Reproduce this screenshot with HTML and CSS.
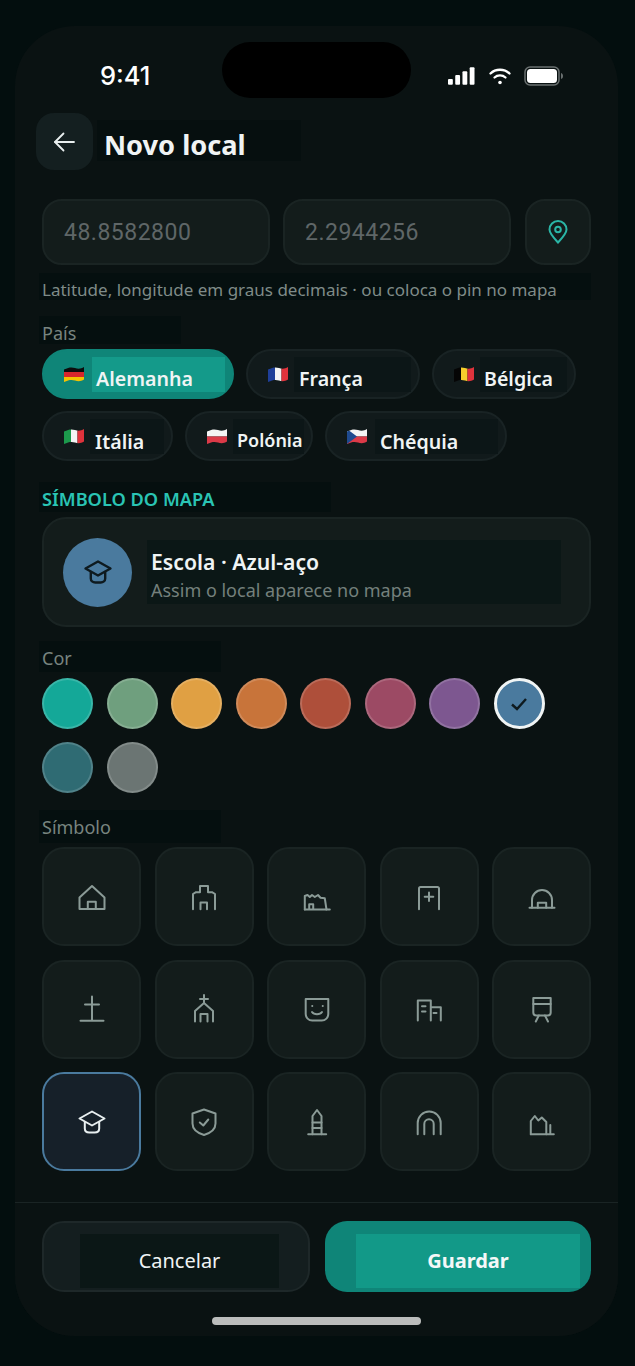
FILE: index.html
```
<!DOCTYPE html>
<html lang="pt">
<head>
<meta charset="utf-8">
<title>Novo local</title>
<meta name="viewport" content="width=device-width, initial-scale=1.0">
<link rel="stylesheet" href="styles.css">
</head>
<body>

<svg class="defs" width="0" height="0" aria-hidden="true">
	<defs>
		<clipPath id="wave"><path d="M0 2.500C5 0 8 0 11 1s6 1 9-1v12.500c-3 2-6 2-9 1s-6-1-11 1.500z"/></clipPath>
		<g id="cap">
			<path d="M15 4.500 27.500 11.500 15 18.500 2.500 11.500z"/>
			<path d="M7.800 15v6.500c0 2.500 2 4 4.500 4h5.400c2.500 0 4.500-1.500 4.500-4V15"/>
		</g>
	</defs>
</svg>

<div class="device">
	<div class="notch"></div>

	<div class="status">
		<span class="time">9:41</span>
		<div class="status-icons">
			<svg width="27" height="18" viewBox="0 0 28 18"><rect x="0" y="12" width="5" height="6" rx="1"/><rect x="7.500" y="8" width="5" height="10" rx="1"/><rect x="15" y="4" width="5" height="14" rx="1"/><rect x="22.500" y="0" width="5" height="18" rx="1"/></svg>
			<svg width="22" height="18" viewBox="0 0 22 18" fill="none" stroke="#fff" stroke-width="2.300" stroke-linecap="round"><path d="M1.500 6.500C6.500 1.500 15.500 1.500 20.500 6.500"/><path d="M5.500 10.500c3-2.800 8-2.800 11 0"/><circle cx="11" cy="15.500" r="1.800" fill="#fff" stroke="none"/></svg>
			<svg width="40" height="20" viewBox="0 0 40 20"><rect x="1" y="1" width="34" height="18" rx="5" fill="none" stroke="#6a7070" stroke-width="1.500"/><rect x="3" y="3" width="30" height="14" rx="3.500" fill="#fff"/><path d="M37 7c1.500.5 2 1.500 2 3s-.5 2.500-2 3z" fill="#6a7070"/></svg>
		</div>
	</div>

	<div class="header">
		<button class="back">
			<svg width="24" height="24" viewBox="0 0 24 24" fill="none" stroke="#e8eeee" stroke-width="1.800" stroke-linecap="round" stroke-linejoin="round"><path d="M21 12H2"/><path d="M10.500 3.500 2 12l8.500 8.500"/></svg>
		</button>
		<h1>Novo local</h1>
	</div>

	<div class="content">
		<div class="coords">
			<div class="input">48.8582800</div>
			<div class="input">2.2944256</div>
			<button class="pin-btn">
				<svg width="20" height="24" viewBox="0 0 20 24" fill="none" stroke="#2ab5a6" stroke-width="2"><path d="M10 22.500C5 17 1.500 13.500 1.500 9.500a8.500 8.500 0 0 1 17 0c0 4-3.500 7.500-8.500 13z"/><circle cx="10" cy="9.500" r="2.800"/></svg>
			</button>
		</div>
		<p class="hint">Latitude, longitude em graus decimais · ou coloca o pin no mapa</p>

		<div class="label label-pais">País</div>
		<div class="chips">
			<div class="chip chip-on chip-de">
				<svg class="flag" viewBox="0 0 20 15"><g clip-path="url(#wave)"><rect width="20" height="5.500" fill="#0c0c0c"/><rect y="5" width="20" height="5" fill="#d8262c"/><rect y="10" width="20" height="5" fill="#f4c400"/></g></svg>
				<span class="chip-name">Alemanha</span>
			</div>
			<div class="chip chip-fr">
				<svg class="flag" viewBox="0 0 20 15"><g clip-path="url(#wave)"><rect width="7" height="15" fill="#1f3f99"/><rect x="7" width="6.500" height="15" fill="#f4f4f4"/><rect x="13.500" width="6.500" height="15" fill="#e0333c"/></g></svg>
				<span class="chip-name">França</span>
			</div>
			<div class="chip chip-be">
				<svg class="flag" viewBox="0 0 20 15"><g clip-path="url(#wave)"><rect width="7" height="15" fill="#050505"/><rect x="7" width="6.500" height="15" fill="#f6cf2c"/><rect x="13.500" width="6.500" height="15" fill="#e0333c"/></g></svg>
				<span class="chip-name">Bélgica</span>
			</div>
			<div class="chip chip-it">
				<svg class="flag" viewBox="0 0 20 15"><g clip-path="url(#wave)"><rect width="7" height="15" fill="#1c9a4c"/><rect x="7" width="6.500" height="15" fill="#f4f4f4"/><rect x="13.500" width="6.500" height="15" fill="#e0333c"/></g></svg>
				<span class="chip-name">Itália</span>
			</div>
			<div class="chip chip-pl">
				<svg class="flag" viewBox="0 0 20 15"><g clip-path="url(#wave)"><rect width="20" height="7.500" fill="#f4f4f4"/><rect y="7.500" width="20" height="7.500" fill="#dc3a48"/></g></svg>
				<span class="chip-name">Polónia</span>
			</div>
			<div class="chip chip-cz">
				<svg class="flag" viewBox="0 0 20 15"><g clip-path="url(#wave)"><rect width="20" height="7.500" fill="#f4f4f4"/><rect y="7.500" width="20" height="7.500" fill="#dc3a48"/><path d="M0 0 10 7.500 0 15z" fill="#1f4a8f"/></g></svg>
				<span class="chip-name">Chéquia</span>
			</div>
		</div>

		<div class="section-title">SÍMBOLO DO MAPA</div>
		<div class="preview">
			<div class="avatar">
				<svg class="icon" viewBox="0 0 30 30"><use href="#cap"/></svg>
			</div>
			<div class="preview-text">
				<div class="preview-title">Escola · Azul-aço</div>
				<div class="preview-sub">Assim o local aparece no mapa</div>
			</div>
		</div>

		<div class="label label-cor">Cor</div>
		<div class="swatches">
			<div class="swatch c-teal"></div>
			<div class="swatch c-sage"></div>
			<div class="swatch c-amber"></div>
			<div class="swatch c-orange"></div>
			<div class="swatch c-rust"></div>
			<div class="swatch c-rose"></div>
			<div class="swatch c-purple"></div>
			<div class="swatch c-steel swatch-on">
				<svg width="18" height="16" viewBox="0 0 18 16" fill="none" stroke="#0e1a1f" stroke-width="2.400"><path d="M2 8.500 7 13 16 3"/></svg>
			</div>
			<div class="swatch c-petrol"></div>
			<div class="swatch c-grey"></div>
		</div>

		<div class="label label-simbolo">Símbolo</div>
		<div class="symbols">
			<div class="symbol"><svg class="icon" viewBox="0 0 30 30"><path d="M2.500 27V15.500L15 4l12.500 11.500V27z"/><path d="M10.800 27v-7.300h8V27"/></svg></div>
			<div class="symbol"><svg class="icon" viewBox="0 0 30 30"><path d="M4 27.300V12l3-1.800h4V4h8v6.200h4l3 1.800v15.300"/><path d="M11.500 27.300v-6.800h6.500v6.800"/></svg></div>
			<div class="symbol"><svg class="icon" viewBox="0 0 30 30"><path d="M2.800 27.500V14l2.700-1 2.300 2 2.200-2 2.800 2 3.200-2 2.500 2.700 4.300.6 1.700 11.200"/><path d="M2.800 27.500h25"/><path d="M7.200 27v-4.700h4V27"/></svg></div>
			<div class="symbol"><svg class="icon" viewBox="0 0 30 30"><path d="M5 27.300V6.500A1.500 1.500 0 0 1 6.500 5h17A1.500 1.500 0 0 1 25 6.500v20.800"/><path d="M15 10.500v8.500M10.700 14.700h8.600"/></svg></div>
			<div class="symbol"><svg class="icon" viewBox="0 0 30 30"><path d="M2.500 25.700h25"/><path d="M5 25.700V18a10 10 0 0 1 20 0v7.700"/><path d="M10.800 25.700v-5h8.400v5"/></svg></div>

			<div class="symbol"><svg class="icon" viewBox="0 0 30 30"><path d="M15 2.500v24.300M8 10.500h14M3.500 26.800h23"/></svg></div>
			<div class="symbol"><svg class="icon" viewBox="0 0 30 30"><path d="M15 1v8M11 5h8"/><path d="M6 27.500V17l9-8 9 8v10.500"/><path d="M11.500 27.500V20h7v7.500"/></svg></div>
			<div class="symbol"><svg class="icon" viewBox="0 0 30 30"><path d="M3.700 5h22.600v15a6.500 6.500 0 0 1-6.500 6.500h-9.600A6.500 6.500 0 0 1 3.700 20z"/><path d="M10 18c2 3 8 3 10 0"/><path d="M10.200 12h.1M20.700 12h.1"/></svg></div>
			<div class="symbol"><svg class="icon" viewBox="0 0 30 30"><path d="M3.800 26.500v-20h13v20"/><path d="M17 13.200h9.800v13.300"/><path d="M8 12.200h3.500M8 17.500h3.500M19.500 19h3"/></svg></div>
			<div class="symbol"><svg class="icon" viewBox="0 0 30 30"><path d="M6.300 4h17.400v14.500a3 3 0 0 1-3 3H9.300a3 3 0 0 1-3-3z"/><path d="M6.300 10h17.400"/><path d="M11.800 21.500l-3 6M18 21.500l3 6"/></svg></div>

			<div class="symbol symbol-on"><svg class="icon" viewBox="0 0 30 30"><use href="#cap"/></svg></div>
			<div class="symbol"><svg class="icon" viewBox="0 0 30 30"><path d="M15 2.500l11.500 4v10c0 6-5 9.500-11.500 11.500-6.500-2-11.500-5.500-11.500-11.500v-10z"/><path d="M10.800 15.500l3.500 3 5-6"/></svg></div>
			<div class="symbol"><svg class="icon" viewBox="0 0 30 30"><path d="M6.200 27.300h18"/><path d="M10.500 27.300V9L15 3l4.500 6v18.300"/><path d="M10.500 15.500h9M10.500 21h9"/></svg></div>
			<div class="symbol"><svg class="icon" viewBox="0 0 30 30"><path d="M3.700 27.300V16a11.500 11.500 0 0 1 23 0v11.300"/><path d="M10.300 27.300V17a4.700 4.700 0 0 1 9.400 0v10.300"/></svg></div>
			<div class="symbol"><svg class="icon" viewBox="0 0 30 30"><path d="M3.800 27.300V14l4-5 3.500 4.500 3.500-3 4.500 4.500v12.300"/><path d="M3.800 27.300h23"/><path d="M23.300 18v9"/></svg></div>
		</div>

		<div class="label label-desc">Descrição</div>
	</div>

	<div class="footer">
		<div class="actions">
			<button class="btn btn-cancel"><span>Cancelar</span></button>
			<button class="btn btn-save"><span>Guardar</span></button>
		</div>
		<div class="home-bar"></div>
	</div>
</div>

</body>
</html>
```

FILE: styles.css
```
*{
	box-sizing:border-box;
}

body{
	margin:0;
	padding:0;
	width:635px;
	height:1366px;
	overflow:hidden;
	background-color:#030e0e;
	font-family:"Noto Sans", sans-serif;
	color:#f0f4f4;
}

button{
	font-family:inherit;
	padding:0;
	margin:0;
	cursor:pointer;
}

.defs{
	position:absolute;
}

.device{
	position:relative;
	display:flex;
	flex-direction:column;
	width:603px;
	height:1310px;
	margin:26px 0 0 15px;
	border-radius:60px;
	background-color:#0a1212;
	overflow:hidden;
}

.notch{
	position:absolute;
	left:207px;
	top:16px;
	width:189px;
	height:56px;
	border-radius:28px;
	background-color:#000;
}

.status{
	display:flex;
	flex:none;
	justify-content:space-between;
	align-items:center;
	height:87px;
	padding:12px 55px 0 85px;
}

.time{
	font-family:Inter, sans-serif;
	font-size:25.500px;
	font-weight:500;
	color:#fff;
}

.status-icons{
	display:flex;
	align-items:center;
	gap:14px;
	margin-right:-1px;
	fill:#fff;
}

.status-icons svg:last-child{
	margin-left:-1px;
}

.header{
	display:flex;
	flex:none;
	align-items:center;
	gap:4px;
	height:57px;
	padding-left:21px;
}

.back{
	display:flex;
	align-items:center;
	justify-content:center;
	width:57px;
	height:57px;
	border:0;
	border-radius:18px;
	background-color:#141f20;
}

h1{
	width:204px;
	height:41px;
	margin:-2px 0 0 0;
	padding:0 0 0 7px;
	font-size:27.200px;
	font-weight:700;
	line-height:49px;
	background-color:#060f0f;
	color:#f0f4f4;
}

.content{
	flex:1;
	min-height:0;
	overflow:hidden;
	padding:29px 27px 0 27px;
}

.coords{
	display:flex;
	gap:13px;
}

.input{
	width:228px;
	height:66px;
	padding-left:20px;
	border:2px solid #1a2423;
	border-radius:20px;
	background-color:#131c1b;
	font-family:Roboto, sans-serif;
	font-size:23px;
	letter-spacing:0.500px;
	line-height:63px;
	color:#5f6667;
}

.pin-btn{
	display:flex;
	align-items:center;
	justify-content:center;
	width:66px;
	height:66px;
	margin-left:1px;
	border:2px solid #1a2423;
	border-radius:20px;
	background-color:#131c1b;
}

.hint{
	height:27px;
	margin:8px 0 0 -3px;
	padding-left:3px;
	font-size:17px;
	line-height:33px;
	background-color:#050f0f;
	color:#7f8b88;
	white-space:nowrap;
}

.label{
	margin-left:-3px;
	padding-left:3px;
	font-size:18px;
	background-color:#050f0f;
	color:#78847f;
	white-space:nowrap;
}

.label-pais{
	width:142px;
	height:28px;
	margin-top:16px;
	line-height:34px;
}

.chips{
	display:flex;
	flex-wrap:wrap;
	gap:12px;
	margin-top:5px;
}

.chip{
	display:flex;
	align-items:center;
	height:50px;
	padding-left:22px;
	border:2px solid #192324;
	border-radius:25px;
	background-color:#111a1b;
}

.chip-on{
	border-color:#0f8578;
	background-color:#0f8578;
}

.chip-de{width:192px;}
.chip-fr{width:174px;}
.chip-be{width:144px;}
.chip-it{width:131px;}
.chip-pl{width:128px;}
.chip-cz{width:182px;}

.flag{
	flex:none;
	width:20px;
	height:15px;
	margin-left:-2px;
}

.chip-name{
	flex:1;
	height:35px;
	margin:0 7px 0 6px;
	padding:8px 0 0 5px;
	font-size:19.600px;
	font-weight:600;
	line-height:27px;
	background-color:#0c1617;
	color:#f0f4f4;
}

.chip-on .chip-name{
	margin-left:8px;
	padding-left:4px;
	background-color:#149a8a;
}

.chip-be .chip-name{
	padding-left:4px;
}

.chip-it .chip-name{
	padding-top:9px;
}

.chip-pl .chip-name{
	padding:8px 0 0 4px;
	font-size:18px;
}

.chip-cz .chip-name{
	margin-left:8px;
	padding-top:9px;
}

.section-title{
	width:292px;
	height:30px;
	margin:21px 0 0 -3px;
	padding-left:3px;
	font-size:18.200px;
	font-weight:600;
	line-height:34px;
	background-color:#050f0f;
	color:#2ac4b4;
}

.preview{
	display:flex;
	align-items:center;
	gap:15px;
	height:110px;
	margin-top:5px;
	padding:0 28px 0 21px;
	border:2px solid #1a2423;
	border-radius:24px;
	background-color:#131c1b;
}

.avatar{
	display:flex;
	flex:none;
	align-items:center;
	justify-content:center;
	width:69px;
	height:69px;
	margin-left:-2px;
	border-radius:50%;
	background-color:#4a7a9e;
}

.icon{
	width:30px;
	height:30px;
	fill:none;
	stroke:#8b9b97;
	stroke-width:2;
	stroke-linecap:round;
	stroke-linejoin:round;
}

.avatar .icon{
	stroke:#0e1a1f;
	stroke-width:2.400;
}

.preview-text{
	flex:1;
	height:64px;
	padding:2px 0 0 4px;
	background-color:#0b1716;
}

.preview-title{
	font-size:21.200px;
	font-weight:600;
	line-height:40px;
	color:#f0f4f4;
}

.preview-sub{
	font-size:18px;
	line-height:20px;
	margin-top:-2px;
	color:#74807c;
}

.label-cor{
	width:182px;
	height:31px;
	margin-top:14px;
	line-height:35px;
}

.swatches{
	display:flex;
	flex-wrap:wrap;
	gap:13px 13.500px;
	margin-top:6px;
}

.swatch{
	display:flex;
	align-items:center;
	justify-content:center;
	width:51px;
	height:51px;
	border:2.500px solid rgba(255,255,255,0.16);
	border-radius:50%;
}

.swatch-on{
	border:3px solid #f0f4f4;
}

.c-teal{background-color:#14a898;}
.c-sage{background-color:#6f9f7e;}
.c-amber{background-color:#e0a043;}
.c-orange{background-color:#c8743a;}
.c-rust{background-color:#ae4f3a;}
.c-rose{background-color:#9c4a64;}
.c-purple{background-color:#7d5790;}
.c-steel{background-color:#4a7a9e;}
.c-petrol{background-color:#2f6b73;}
.c-grey{background-color:#6b7573;}

.label-simbolo{
	width:182px;
	height:33px;
	margin-top:17px;
	line-height:35px;
}

.symbols{
	display:grid;
	grid-template-columns:repeat(5, 99px);
	grid-auto-rows:99px;
	gap:13.500px;
	margin-top:4px;
}

.symbol{
	display:flex;
	align-items:center;
	justify-content:center;
	border:2px solid #1a2423;
	border-radius:22px;
	background-color:#131c1b;
}

.symbol-on{
	border-color:#4a7a9e;
	background-color:#162029;
}

.symbol-on .icon{
	stroke:#e8eff0;
}

.label-desc{
	width:182px;
	margin-top:22.500px;
	line-height:34px;
	background:none;
}

.footer{
	flex:none;
	height:134px;
	padding:18px 27px 0 27px;
	border-top:1px solid #1a2424;
	background-color:#0a1212;
}

.actions{
	display:flex;
	gap:15px;
}

.btn{
	display:flex;
	height:71px;
	border-radius:22px;
	font-size:20px;
}

.btn span{
	display:block;
	flex:1;
	height:54px;
	margin-top:13px;
	line-height:54px;
}

.btn-cancel{
	width:268px;
	padding:0 29px 0 36px;
	border:2px solid #1e2829;
	background-color:#141e1f;
	color:#f0f4f4;
}

.btn-cancel span{
	margin-top:11px;
	background-color:#0b1716;
}

.btn-save{
	width:266px;
	padding:0 11px 0 31px;
	border:0;
	background-color:#0f8578;
	color:#f4f8f8;
	font-weight:700;
}

.btn-save span{
	background-color:#129988;
}

.home-bar{
	width:209px;
	height:8px;
	margin:25px auto 0 auto;
	border-radius:4px;
	background-color:#bbbdbc;
}
```
